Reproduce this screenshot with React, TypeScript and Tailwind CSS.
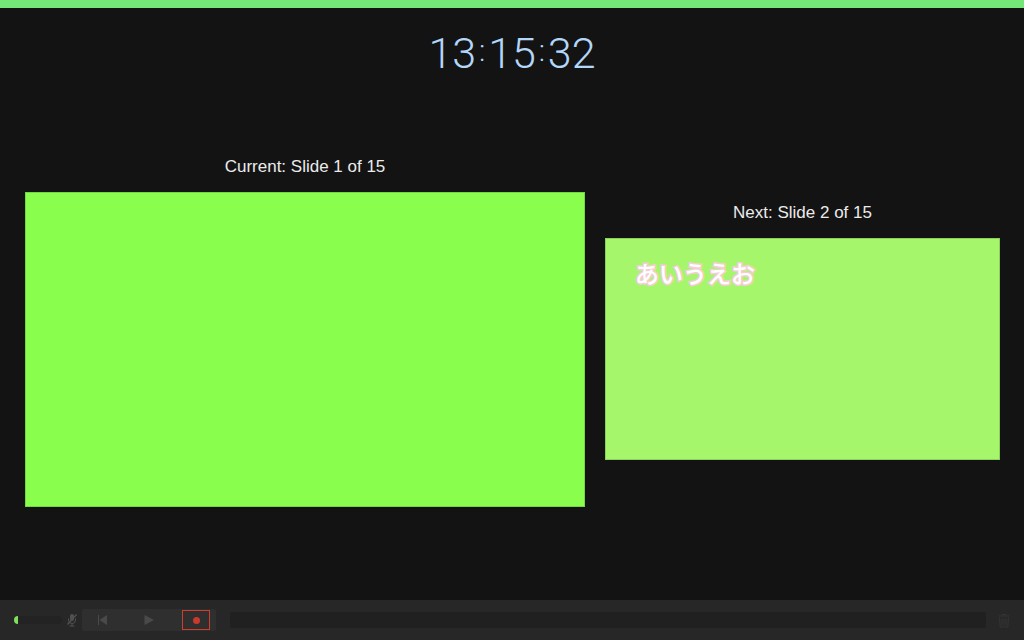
import type { ReactNode } from 'react'

interface SlidePreviewProps {
  label: string
  slideClass: string
  children?: ReactNode
}

function SlidePreview({ label, slideClass, children }: SlidePreviewProps) {
  return (
    <section className="flex flex-col gap-3">
      <h2 className="text-center text-[17px] leading-[26px] text-[#ebebeb]">{label}</h2>
      <div className={`aspect-video border border-black/15 ${slideClass}`}>{children}</div>
    </section>
  )
}

function Clock({ time }: { time: string }) {
  const [hours, minutes, seconds] = time.split(':')

  return (
    <time className="flex items-center font-['Roboto',sans-serif] text-[43px] font-light leading-[48px] text-[#b3d7f8]">
      {hours}
      <ClockColon />
      {minutes}
      <ClockColon />
      {seconds}
    </time>
  )
}

function ClockColon() {
  return <span className="w-3 pb-1 text-center text-[30px] leading-8">:</span>
}

function MicOffIcon() {
  return (
    <svg width="12" height="14" viewBox="0 0 12 14" fill="none" stroke="#505050" aria-hidden="true">
      <rect x="4" y="1" width="4" height="7" rx="2" fill="#505050" stroke="none" />
      <path d="M2.5 5.5v1.5a3.5 3.5 0 0 0 7 0V5.5M6 10.5V13M3.5 13h5" />
      <path d="M10.5 1.5 1.5 11.5" strokeWidth="1.4" />
    </svg>
  )
}

function TrashIcon() {
  return (
    <svg width="12" height="15" viewBox="0 0 12 15" fill="none" stroke="#353535" aria-hidden="true">
      <path d="M4 2.5v-1h4v1M0.5 3h11M1.5 4.5l.7 9.5h7.6l.7-9.5M4 5.5v7M6 5.5v7M8 5.5v7" />
    </svg>
  )
}

export default function App() {
  return (
    <div className="flex min-h-screen flex-col bg-[#131313] font-['Liberation_Sans',sans-serif]">
      <div className="h-2 bg-[#73e879]" />

      <header className="flex h-[90px] items-center justify-center">
        <Clock time="13:15:32" />
      </header>

      {/* Slides */}
      <main className="grid flex-1 grid-cols-[560fr_395fr] items-center gap-5 pr-6 pb-[38px] pl-[25px]">
        <SlidePreview label="Current: Slide 1 of 15" slideClass="bg-[#8afe4c]" />
        <SlidePreview label="Next: Slide 2 of 15" slideClass="bg-[#a5f66a] pt-5 pl-[29px]">
          <p
            lang="ja"
            className="font-['Noto_Sans_CJK_JP',sans-serif] text-2xl leading-7 font-medium text-white [-webkit-text-stroke:3px_#f5cdd3] [paint-order:stroke_fill]"
          >
            あいうえお
          </p>
        </SlidePreview>
      </main>

      {/* Recording controls */}
      <footer className="flex h-10 items-center bg-[#272727] px-[14px]">
        <div
          className="h-2 w-12 overflow-hidden rounded-full bg-[#232323]"
          role="meter"
          aria-label="Input level"
          aria-valuenow={8}
        >
          <div className="h-2 w-1 bg-[#7fe05c]" />
        </div>
        <button className="ml-1 flex h-5 w-3 items-center" aria-label="Microphone">
          <MicOffIcon />
        </button>

        <div className="ml-1 flex h-[22px] items-center gap-[19px] rounded-xs bg-[#2f2f2f] px-[6px]">
          <button className="flex h-5 w-7 items-center justify-center" aria-label="Previous">
            <svg width="9" height="10" viewBox="0 0 9 10" fill="#4a4a4a" aria-hidden="true">
              <path d="M0 0h1v10H0zM9 0v10L1.5 5z" />
            </svg>
          </button>
          <button className="flex h-5 w-7 items-center justify-center" aria-label="Play">
            <svg width="10" height="10" viewBox="0 0 10 10" fill="#4a4a4a" aria-hidden="true">
              <path d="M0.5 0 10 5 0.5 10z" />
            </svg>
          </button>
          <button className="flex h-5 w-7 items-center justify-center border border-[#d23c2a]" aria-label="Record">
            <span className="size-[7px] rounded-full bg-[#c93a2c]" />
          </button>
        </div>

        <div className="mr-3 ml-[14px] h-4 flex-1 rounded-xs bg-[#202020]" />
        <button className="flex h-5 w-3 items-center" aria-label="Delete recording">
          <TrashIcon />
        </button>
      </footer>
    </div>
  )
}
